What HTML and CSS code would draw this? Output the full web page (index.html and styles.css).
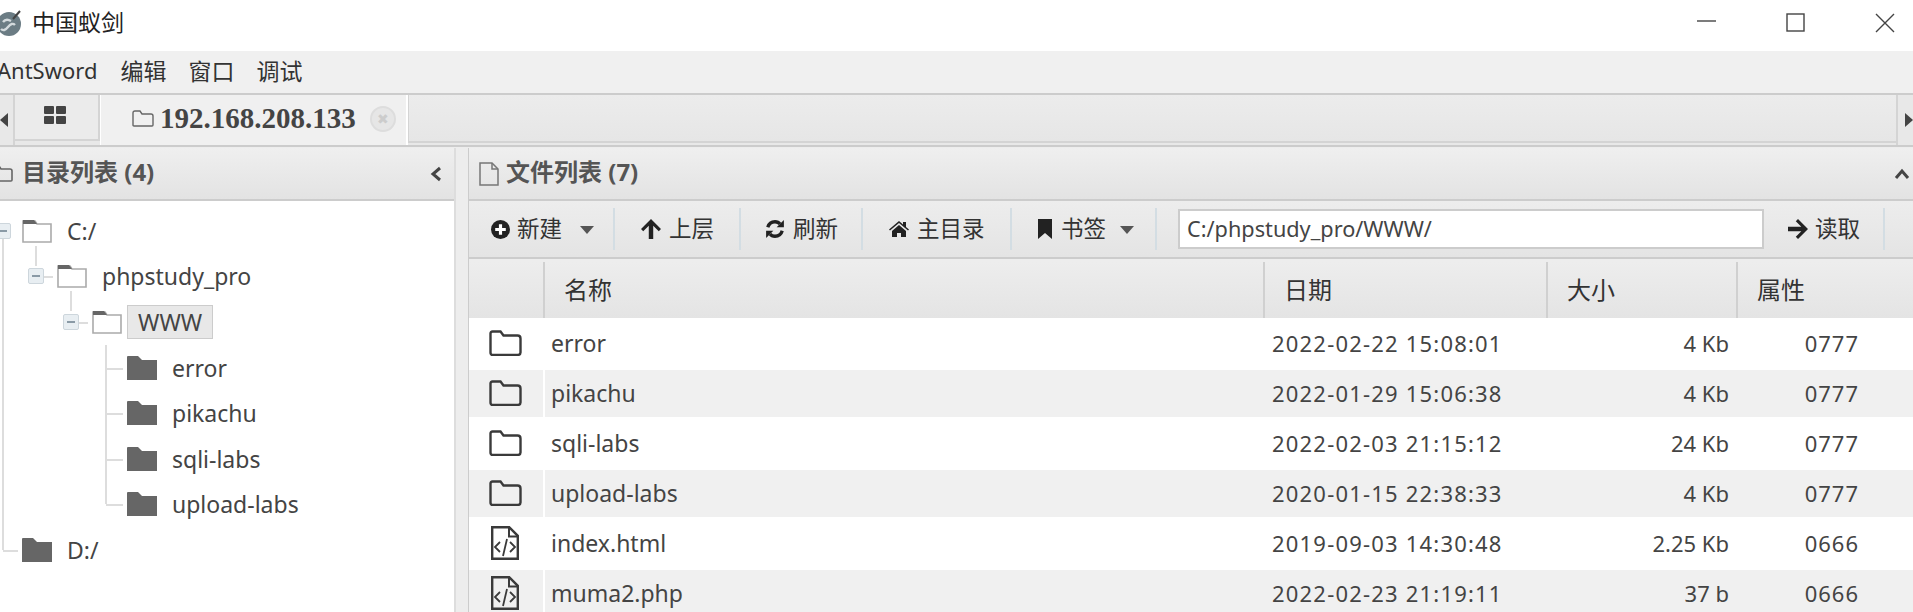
FILE: index.html
```html
<!doctype html>
<html lang="en">
<head>
  <meta charset="utf-8">
  <title>中国蚁剑</title>
  <link rel="stylesheet" href="styles.css">
</head>
<body>
  <svg class="defs" width="0" height="0">
    <symbol id="folderOpen" viewBox="0 0 30 24">
      <path d="M1 23V2h12l2 3h14v18z" fill="#fff" stroke="#aaa" stroke-width="1.6"/>
      <path d="M1 5V1h11l3 4z" fill="#666"/>
    </symbol>
    <symbol id="folderFull" viewBox="0 0 30 24">
      <path d="M0 24V1q0-1 1-1h10l4 4h15v20z" fill="#666"/>
    </symbol>
    <symbol id="folderLine" viewBox="0 0 33 26">
      <path d="M1.500 22V3.500q0-2 2-2h8l3 4h14q3 0 3 3v14q0 2.500-3 2.500h-25q-2 0-2-2.500z" fill="none" stroke="#3a3a3a" stroke-width="2.400"/>
    </symbol>
    <symbol id="fileCode" viewBox="0 0 28 34">
      <path d="M1.200 1.200h17l8.600 8.600v23H1.200z" fill="none" stroke="#3a3a3a" stroke-width="2.400"/>
      <path d="M18 1.500v9h9" fill="none" stroke="#3a3a3a" stroke-width="2"/>
      <path d="M9 16l-5 5 5 5M19 16l5 5-5 5M16 13l-4 17" fill="none" stroke="#3a3a3a" stroke-width="1.800"/>
    </symbol>
    <symbol id="caret" viewBox="0 0 14 9"><path d="M0 1h14L7 9z" fill="#555"/></symbol>
  </svg>

  <div class="titlebar">
    <svg class="logo" width="30" height="30" viewBox="0 0 30 30">
      <circle cx="13" cy="16" r="12" fill="#6b7c84"/>
      <path d="M5 21q3 3 7-2t7-2M7 14q3-4 8-1" fill="none" stroke="#d3dadd" stroke-width="2.400"/>
      <path d="M17 11L24 3" stroke="#444" stroke-width="2"/>
    </svg>
    <span class="appName">中国蚁剑</span>
    <div class="winButtons">
      <svg width="20" height="20" viewBox="0 0 20 20"><path d="M0 8h19" stroke="#444" stroke-width="1.4"/></svg>
      <svg width="20" height="20" viewBox="0 0 20 20"><rect x="1" y="1" width="17" height="17" fill="none" stroke="#444" stroke-width="1.4"/></svg>
      <svg width="20" height="20" viewBox="0 0 20 20"><path d="M1 1l18 18M19 1L1 19" stroke="#444" stroke-width="1.4"/></svg>
    </div>
  </div>

  <div class="menu">
    <span>AntSword</span><span class="cjk">编辑</span><span class="cjk">窗口</span><span class="cjk">调试</span>
  </div>

  <div class="tabs">
    <div class="tabArrow"><svg width="8" height="14" viewBox="0 0 8 14"><path d="M8 0v14L0 7z" fill="#444"/></svg></div>
    <div class="tab gridTab">
      <svg width="22" height="18" viewBox="0 0 22 18"><path d="M0 1q0-1 1-1h8q1 0 1 1v6q0 1-1 1H1q-1 0-1-1zM12 1q0-1 1-1h8q1 0 1 1v6q0 1-1 1h-8q-1 0-1-1zM0 11q0-1 1-1h8q1 0 1 1v6q0 1-1 1H1q-1 0-1-1zM12 11q0-1 1-1h8q1 0 1 1v6q0 1-1 1h-8q-1 0-1-1z" fill="#444"/></svg>
    </div>
    <div class="tab activeTab">
      <svg width="22" height="17" viewBox="0 0 22 17"><path d="M1 15V3q0-2 2-2h5l2 3h9q2 0 2 2v9q0 1-1 1H2q-1 0-1-1z" fill="none" stroke="#666" stroke-width="1.400"/></svg>
      <span class="tabTitle">192.168.208.133</span>
      <span class="tabClose">✖</span>
    </div>
    <div class="tabRest"></div>
    <div class="tabArrow rightArrow"><svg width="8" height="14" viewBox="0 0 8 14"><path d="M0 0v14l8-7z" fill="#444"/></svg></div>
  </div>

  <div class="main">
    <div class="leftPanel">
      <div class="panelHead leftHead">
        <svg width="22" height="17" viewBox="0 0 22 17"><path d="M1 15V3q0-2 2-2h5l2 3h9q2 0 2 2v9q0 1-1 1H2q-1 0-1-1z" fill="none" stroke="#666" stroke-width="1.600"/></svg>
        <span>目录列表 (4)</span>
        <svg class="collapse" width="12" height="16" viewBox="0 0 12 16"><path d="M10 2L3 8l7 6" fill="none" stroke="#444" stroke-width="3"/></svg>
      </div>
      <div class="tree">
        <div class="node">
          <i class="cell line lineBottom"><b class="box"></b></i>
          <svg class="nodeIcon"><use href="#folderOpen"/></svg><span class="label">C:/</span>
        </div>
        <div class="node">
          <i class="cell line"></i>
          <i class="cell stub"><b class="box"></b></i>
          <svg class="nodeIcon"><use href="#folderOpen"/></svg><span class="label">phpstudy_pro</span>
        </div>
        <div class="node">
          <i class="cell line"></i><i class="cell"></i>
          <i class="cell stub"><b class="box"></b></i>
          <svg class="nodeIcon"><use href="#folderOpen"/></svg><span class="label selected">WWW</span>
        </div>
        <div class="node">
          <i class="cell line"></i><i class="cell"></i><i class="cell"></i>
          <i class="cell line branch"></i>
          <svg class="nodeIcon"><use href="#folderFull"/></svg><span class="label">error</span>
        </div>
        <div class="node">
          <i class="cell line"></i><i class="cell"></i><i class="cell"></i>
          <i class="cell line branch"></i>
          <svg class="nodeIcon"><use href="#folderFull"/></svg><span class="label">pikachu</span>
        </div>
        <div class="node">
          <i class="cell line"></i><i class="cell"></i><i class="cell"></i>
          <i class="cell line branch"></i>
          <svg class="nodeIcon"><use href="#folderFull"/></svg><span class="label">sqli-labs</span>
        </div>
        <div class="node">
          <i class="cell line"></i><i class="cell"></i><i class="cell"></i>
          <i class="cell corner branch"></i>
          <svg class="nodeIcon"><use href="#folderFull"/></svg><span class="label">upload-labs</span>
        </div>
        <div class="node">
          <i class="cell corner branch"></i>
          <svg class="nodeIcon"><use href="#folderFull"/></svg><span class="label">D:/</span>
        </div>
      </div>
    </div>

    <div class="rightPanel">
      <div class="panelHead rightHead">
        <svg width="20" height="24" viewBox="0 0 20 24"><path d="M1 1h12l6 6v16H1z" fill="none" stroke="#777" stroke-width="1.500"/><path d="M13 1v6h6" fill="none" stroke="#777" stroke-width="1.500"/></svg>
        <span>文件列表 (7)</span>
        <svg class="collapse" width="16" height="12" viewBox="0 0 16 12"><path d="M2 10l6-7 6 7" fill="none" stroke="#444" stroke-width="3"/></svg>
      </div>
      <div class="toolbar">
        <div class="toolItem newItem">
          <svg width="19" height="19" viewBox="0 0 18 18"><circle cx="9" cy="9" r="9" fill="#222"/><path d="M9 4v10M4 9h10" stroke="#fff" stroke-width="3"/></svg>
          <span>新建</span>
          <svg class="caret"><use href="#caret"/></svg>
        </div>
        <div class="toolItem upItem">
          <svg width="20" height="20" viewBox="0 0 18 18"><path d="M9 0l9 9-2 2-5-5v12H7V6l-5 5-2-2z" fill="#222"/></svg>
          <span>上层</span>
        </div>
        <div class="toolItem refreshItem">
          <svg width="20" height="20" viewBox="0 0 18 18"><path d="M2.500 7.500Q4 2.500 9 2.500q3 0 4.500 2M15.500 10.500Q14 15.500 9 15.500q-3 0-4.500-2" fill="none" stroke="#222" stroke-width="3"/><path d="M17 1v6.500h-6.500zM1 17v-6.500h6.500z" fill="#222"/></svg>
          <span>刷新</span>
        </div>
        <div class="toolItem homeItem">
          <svg width="20" height="16" viewBox="0 0 20 16"><path d="M10 0l4 3.500V1h3v5l3 2.500-1 1-9-7.500-9 7.500-1-1zM3 10l7-6 7 6v6h-5v-4H8v4H3z" fill="#222"/></svg>
          <span>主目录</span>
        </div>
        <div class="toolItem markItem">
          <svg width="16" height="20" viewBox="0 0 16 20"><path d="M1 0h14v20l-7-6-7 6z" fill="#222"/></svg>
          <span>书签</span>
          <svg class="caret"><use href="#caret"/></svg>
        </div>
        <input class="pathBox" type="text" value="C:/phpstudy_pro/WWW/">
        <div class="toolItem readItem">
          <svg width="20" height="20" viewBox="0 0 18 18"><path d="M18 9l-9 9-2-2 5-5H0V7h12L7 2l2-2z" fill="#222"/></svg>
          <span>读取</span>
        </div>
      </div>

      <table class="files">
        <colgroup>
          <col class="colIcon"><col class="colName"><col class="colDate"><col class="colSize"><col class="colAttr">
        </colgroup>
        <thead>
          <tr><th></th><th>名称</th><th>日期</th><th>大小</th><th>属性</th></tr>
        </thead>
        <tbody>
          <tr><td><svg class="fold"><use href="#folderLine"/></svg></td><td class="name">error</td><td class="date">2022-02-22 15:08:01</td><td class="size">4 Kb</td><td class="attr">0777</td></tr>
          <tr><td><svg class="fold"><use href="#folderLine"/></svg></td><td class="name">pikachu</td><td class="date">2022-01-29 15:06:38</td><td class="size">4 Kb</td><td class="attr">0777</td></tr>
          <tr><td><svg class="fold"><use href="#folderLine"/></svg></td><td class="name">sqli-labs</td><td class="date">2022-02-03 21:15:12</td><td class="size">24 Kb</td><td class="attr">0777</td></tr>
          <tr><td><svg class="fold"><use href="#folderLine"/></svg></td><td class="name">upload-labs</td><td class="date">2020-01-15 22:38:33</td><td class="size">4 Kb</td><td class="attr">0777</td></tr>
          <tr><td><svg class="code"><use href="#fileCode"/></svg></td><td class="name">index.html</td><td class="date">2019-09-03 14:30:48</td><td class="size">2.25 Kb</td><td class="attr">0666</td></tr>
          <tr><td><svg class="code"><use href="#fileCode"/></svg></td><td class="name">muma2.php</td><td class="date">2022-02-23 21:19:11</td><td class="size">37 b</td><td class="attr">0666</td></tr>
        </tbody>
      </table>
    </div>
  </div>
</body>
</html>
```

FILE: styles.css
```css
html, body {
  margin: 0;
  height: 612px;
  overflow: hidden;
}
body {
  background: #ededed;
  color: #333;
  font-family: "Noto Sans", "Noto Sans CJK SC", sans-serif;
  font-size: 22px;
}
svg {
  display: block;
  flex: none;
}
.defs {
  position: absolute;
}

/* window title */
.titlebar {
  height: 51px;
  background: #fff;
  display: flex;
  align-items: center;
  box-sizing: border-box;
  padding-bottom: 6px;
}
.logo {
  margin-left: -4px;
  margin-right: 6px;
}
.appName {
  color: #222;
  font-size: 23px;
  margin-bottom: 4px;
}
.winButtons {
  margin-left: auto;
  margin-right: 18px;
  display: flex;
  gap: 69px;
}

/* menu */
.menu {
  height: 42px;
  box-sizing: border-box;
  padding-bottom: 4px;
  background: #f0f0f0;
  display: flex;
  align-items: center;
  gap: 23px;
  margin-left: -3px;
  color: #333;
}
.menu .cjk {
  font-size: 23px;
  margin-right: -1px;
}
.menu .cjk:first-of-type {
  margin-left: 1px;
}

/* tabs */
.tabs {
  height: 54px;
  box-sizing: border-box;
  display: flex;
  border-top: 2px solid #ccc;
  border-bottom: 2px solid #ccc;
  background: #e8e8e8;
}
.tabArrow {
  width: 13px;
  display: flex;
  align-items: center;
  justify-content: flex-start;
  border-right: 2px solid #d4d4d4;
}
.rightArrow {
  width: 15px;
  border-right: 0;
  border-left: 2px solid #d4d4d4;
  justify-content: flex-end;
}
.tab {
  display: flex;
  align-items: center;
  box-sizing: border-box;
}
.gridTab {
  width: 85px;
  height: 46px;
  padding-left: 29px;
  padding-bottom: 4px;
  background: #ebebeb;
  border-bottom: 2px solid #d4d4d4;
  border-right: 2px solid #d4d4d4;
}
.activeTab {
  width: 308px;
  padding-left: 31px;
  padding-bottom: 3px;
  background: #f0f0f0;
  border-left: 1px solid #fff;
  border-right: 2px solid #fff;
}
.tabTitle {
  font-family: "Liberation Serif", serif;
  font-weight: bold;
  font-size: 29px;
  color: #444;
  margin-left: 6px;
}
.tabClose {
  width: 26px;
  height: 26px;
  box-sizing: border-box;
  margin-left: 14px;
  border: 2px solid #ddd;
  border-radius: 50%;
  background: #e6e6e6;
  color: #ccc;
  font-size: 14px;
  line-height: 22px;
  text-align: center;
}
.tabRest {
  flex: 1;
  height: 46px;
  border-left: 1px solid #d4d4d4;
  border-bottom: 2px solid #d4d4d4;
  background: linear-gradient(#ececec, #e6e6e6);
}

/* panels */
.main {
  display: flex;
  gap: 12px;
  margin-top: 1px;
}
.leftPanel {
  width: 456px;
  flex: none;
  background: #fff;
  border-right: 2px solid #ddd;
  box-sizing: border-box;
  height: 465px;
}
.rightPanel {
  flex: 1;
  min-width: 0;
  border-left: 1px solid #ccc;
}
.panelHead {
  height: 53px;
  box-sizing: border-box;
  display: flex;
  align-items: center;
  background: linear-gradient(#efefef, #e3e3e3);
  border-bottom: 2px solid #ccc;
  font-weight: bold;
  font-size: 24px;
  color: #555;
}
.panelHead span {
  position: relative;
  top: -3px;
}
.leftHead {
  padding-right: 12px;
  margin-left: -9px;
}
.leftHead span {
  margin-left: 9px;
}
.rightHead {
  padding-left: 10px;
  padding-right: 3px;
}
.rightHead span {
  margin-left: 7px;
}
.collapse {
  margin-left: auto;
}

/* directory tree */
.tree {
  margin-left: -15px;
  padding-top: 7px;
}
.node {
  height: 45.6px;
  display: flex;
  align-items: center;
}
.cell {
  width: 35px;
  align-self: stretch;
  flex: none;
  position: relative;
}
.line::before, .corner::before, .stub::before {
  content: "";
  position: absolute;
  left: 15px;
  top: 0;
  border-left: 2px solid #ddd;
}
.line::before {
  bottom: 0;
}
.corner::before {
  height: 50%;
}
.stub::before {
  top: -8px;
  height: 20px;
}
.cell:first-child::before {
  left: 17px;
}
.lineBottom::before {
  top: 50%;
}
.branch::after, .stub::after {
  content: "";
  position: absolute;
  left: 16px;
  right: 2px;
  top: 50%;
  border-top: 2px solid #ddd;
}
.cell:first-child::after {
  left: 18px;
}
.box {
  position: absolute;
  left: 8px;
  top: 50%;
  width: 16px;
  height: 16px;
  margin-top: -8px;
  box-sizing: border-box;
  border: 1px solid #cdd6dc;
  border-radius: 2px;
  background: #e8eef2;
  z-index: 1;
}
.cell:first-child .box {
  left: 10px;
}
.box::after {
  content: "";
  position: absolute;
  left: 3px;
  right: 3px;
  top: 6px;
  border-top: 2px solid #8a9aa6;
}
.nodeIcon {
  width: 30px;
  height: 24px;
  margin-left: 2px;
  margin-right: 3px;
}
.label {
  padding: 0 11px;
  color: #444;
  font-size: 23px;
  line-height: 32px;
  border: 1px solid transparent;
}
.selected {
  margin-left: 2px;
  padding: 0 10px;
  background: #e8e8e8;
  border-color: #ccc;
}

/* toolbar */
.toolbar {
  height: 58px;
  box-sizing: border-box;
  display: flex;
  align-items: center;
  background: linear-gradient(#ededed, #e4e4e4);
  border-bottom: 2px solid #ccc;
  margin-bottom: 3px;
  color: #333;
}
.toolItem {
  height: 42px;
  box-sizing: border-box;
  display: flex;
  align-items: center;
  gap: 6px;
  border-right: 2px solid #d3dde3;
}
.toolItem span {
  font-size: 22.500px;
  position: relative;
  top: -2px;
}
.caret {
  width: 14px;
  height: 9px;
  margin-left: 11px;
}
.newItem {
  width: 146px;
  padding-left: 22px;
  gap: 7px;
}
.upItem {
  width: 126px;
  padding-left: 26px;
  gap: 8px;
}
.refreshItem {
  width: 122px;
  padding-left: 24px;
  gap: 8px;
}
.homeItem {
  width: 149px;
  padding-left: 26px;
  gap: 8px;
}
.markItem {
  width: 145px;
  padding-left: 25px;
  gap: 8px;
}
.markItem .caret {
  margin-left: 6px;
}
.pathBox {
  width: 586px;
  height: 40px;
  box-sizing: border-box;
  margin-left: 21px;
  padding: 0 7px 2px;
  border: 2px solid #ccc;
  background: #fff;
  color: #444;
  font-family: "Noto Sans", sans-serif;
  font-size: 21.700px;
}
.readItem {
  width: 121px;
  padding-left: 24px;
  gap: 7px;
}

/* file table */
.files {
  width: 100%;
  table-layout: fixed;
  border-collapse: separate;
  border-spacing: 0;
  background: #fff;
}
.colIcon { width: 76px; }
.colName { width: 720px; }
.colDate { width: 283px; }
.colSize { width: 190px; }
.colAttr { width: 175px; }
.files th {
  height: 56px;
  box-sizing: border-box;
  padding: 0 0 4px 19px;
  text-align: left;
  font-weight: normal;
  color: #333;
  font-size: 24px;
  background: linear-gradient(#ededed, #e4e4e4);
  border-right: 2px solid #d0d0d0;
}
.files th:last-child {
  border-right: 0;
}
.files tbody::before {
  content: "";
  display: block;
  height: 2px;
}
.files td {
  height: 50px;
  box-sizing: border-box;
  padding: 0 0 4px 6px;
  color: #444;
  overflow: hidden;
  white-space: nowrap;
}
.files td:first-child {
  padding: 0 0 4px 20px;
  border-right: 2px solid #fff;
}
.files tbody tr:nth-child(even) td {
  background: #f0f0f0;
  border-bottom: 3px solid #fff;
  padding-top: 3px;
}
.fold {
  width: 33px;
  height: 26px;
}
.code {
  width: 28px;
  height: 34px;
  margin-left: 2px;
}
.files .name {
  font-size: 23px;
}
.files .date {
  padding-left: 7px;
  letter-spacing: 1.200px;
}
.files .size {
  padding-left: 0;
  padding-right: 9px;
  text-align: right;
}
.files .attr {
  padding-left: 0;
  padding-right: 54px;
  text-align: right;
  letter-spacing: 1px;
}
```
